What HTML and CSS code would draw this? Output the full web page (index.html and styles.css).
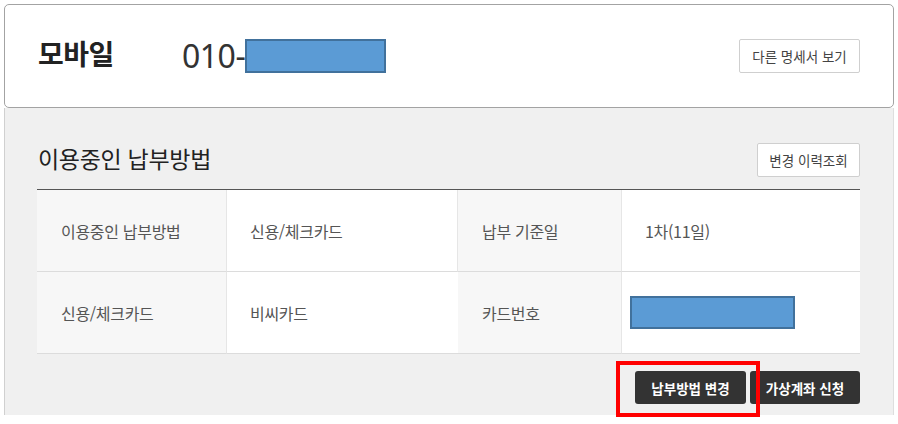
FILE: index.html
```html
<!DOCTYPE html>
<html lang="ko">
<head>
<meta charset="utf-8">
<title>모바일 납부방법</title>
<link rel="stylesheet" href="styles.css">
</head>
<body>
<div class="page">
  <div class="card">
    <div class="card-left">
      <h1 class="card-title">모바일</h1>
      <div class="phone"><span class="phone-num">010-</span><span class="mask mask-phone"></span></div>
    </div>
    <button class="btn-light">다른 명세서 보기</button>
  </div>
  <div class="panel">
    <div class="panel-head">
      <h2 class="panel-title">이용중인 납부방법</h2>
      <button class="btn-light btn-small">변경 이력조회</button>
    </div>
    <div class="table">
      <div class="cell label">이용중인 납부방법</div>
      <div class="cell value">신용/체크카드</div>
      <div class="cell label">납부 기준일</div>
      <div class="cell value">1차(11일)</div>
      <div class="cell label">신용/체크카드</div>
      <div class="cell value">비씨카드</div>
      <div class="cell label">카드번호</div>
      <div class="cell value value-mask"><span class="mask mask-card"></span></div>
    </div>
    <div class="actions">
      <div class="highlight-wrap">
        <button class="btn-dark">납부방법 변경</button>
        <span class="highlight"></span>
      </div>
      <button class="btn-dark">가상계좌 신청</button>
    </div>
  </div>
</div>
</body>
</html>
```
FILE: styles.css
```css
* { box-sizing: border-box; }
html, body { margin: 0; padding: 0; background: #fff; }
body {
  font-family: "Noto Sans CJK KR", "Noto Sans", sans-serif;
  color: #333;
}
.page {
  padding: 4px 4px 10px 4px;
  width: 898px;
  min-height: 424px;
}
.card {
  height: 104px;
  border: 1px solid #a3a3a3;
  border-radius: 5px;
  background: #fff;
  display: flex;
  align-items: center;
  justify-content: space-between;
  padding: 0 33px 0 33px;
}
.card-left {
  display: flex;
  align-items: center;
}
.card-title {
  margin: 0;
  width: 144px;
  font-size: 28px;
  font-weight: 700;
  line-height: 32px;
  color: #222;
  position: relative;
  top: -3px;
  letter-spacing: -0.5px;
}
.phone {
  display: flex;
  align-items: center;
}
.phone-num {
  font-family: "Noto Sans", sans-serif;
  font-size: 32px;
  line-height: 34px;
  color: #333;
  letter-spacing: -0.5px;
}
.mask {
  display: block;
  background: #5b9bd5;
  border: 2px solid #41719c;
}
.mask-phone {
  width: 141px;
  height: 34px;
  margin-left: 0;
}
.btn-light {
  font-family: "Noto Sans CJK KR", sans-serif;
  font-size: 13.5px;
  line-height: 18px;
  color: #444;
  background: #fff;
  border: 1px solid #cfcfcf;
  border-radius: 2px;
  height: 34px;
  width: 121px;
  padding: 0;
  margin-top: 0;
}
.btn-small {
  width: 103px;
}
.panel {
  height: 307px;
  background: #f0f0f0;
  border-left: 1px solid #d0d0d0;
  border-right: 1px solid #dedede;
  padding: 35px 33px 0 32px;
}
.panel-head {
  display: flex;
  align-items: center;
  justify-content: space-between;
  height: 34px;
  padding-left: 1px;
}
.panel-title {
  margin: 0;
  font-size: 23px;
  font-weight: 400;
  line-height: 28px;
  color: #222;
  position: relative;
  top: -2px;
  letter-spacing: -0.3px;
}
.table {
  margin-top: 12px;
  display: grid;
  grid-template-columns: 190px 231px 164px 238px;
  grid-auto-rows: 82px;
  border-top: 1px solid #555;
}
.cell {
  display: flex;
  align-items: center;
  font-size: 16px;
  line-height: 20px;
  color: #555;
  border-bottom: 1px solid #dcdcdc;
  padding-left: 24px;
  letter-spacing: -0.3px;
}
.label {
  background: #f7f7f7;
  border-right: 1px solid #e6e6e6;
}
.value {
  background: #fff;
  padding-left: 23px;
}
.value:nth-child(2) {
  border-right: 1px solid #e6e6e6;
}
.value-mask {
  padding-left: 8px;
}
.mask-card {
  width: 165px;
  height: 33px;
  margin-top: -1px;
}
.actions {
  margin-top: 17px;
  display: flex;
  justify-content: flex-end;
  gap: 4px;
}
.highlight-wrap {
  position: relative;
  display: flex;
}
.btn-dark {
  font-family: "Noto Sans CJK KR", sans-serif;
  font-size: 13.5px;
  font-weight: 700;
  line-height: 18px;
  color: #fff;
  background: #333;
  border: none;
  border-radius: 3px;
  height: 33px;
  width: 111px;
  padding: 0;
}
.actions > .btn-dark {
  width: 110px;
}
.highlight {
  position: absolute;
  left: -19px;
  top: -10px;
  width: 144px;
  height: 56px;
  border: 4px solid #f00;
  pointer-events: none;
}
```
